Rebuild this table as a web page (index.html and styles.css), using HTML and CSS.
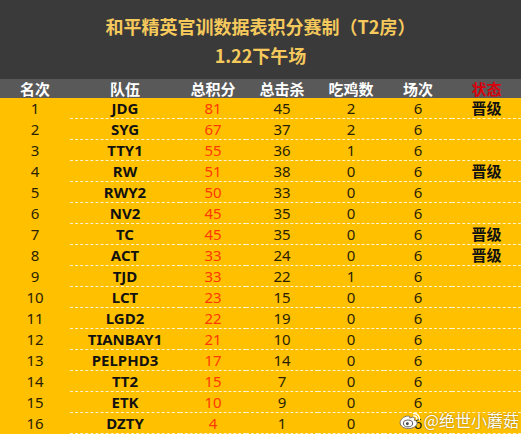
FILE: index.html
```html
<!DOCTYPE html>
<html lang="zh">
<head>
    <meta charset="UTF-8">
    <title>和平精英官训数据表</title>
    <link rel="stylesheet" href="styles.css">
</head>
<body>
    <div class="sheet">
        <div class="title">
            <div>和平精英官训数据表积分赛制（T2房）</div>
            <div>1.22下午场</div>
        </div>
        <div class="row head">
            <div>名次</div><div>队伍</div><div>总积分</div><div>总击杀</div><div>吃鸡数</div><div>场次</div><div class="state">状态</div>
        </div>
        <div id="rows"></div>
        <div class="mark">
            <svg width="22" height="19" viewBox="0 0 20 17">
                <path d="M8 4.5C4.5 4.5 1 7.6 1 10.6c0 3 3.4 5.2 7.5 5.2 4.4 0 8-2.3 8-5 0-1.7-1.5-2.3-2.6-2.6.5-1 .6-2.5-.9-2.7-1.2-.2-3 .7-3.3.8.3-1 .2-2.1-1.7-1.8z" fill="#fff" stroke="#666" stroke-width="0.8"/>
                <ellipse cx="8.2" cy="11.2" rx="4.2" ry="3.1" fill="none" stroke="#666" stroke-width="1"/>
                <circle cx="7.6" cy="11.5" r="1.3" fill="#444"/>
                <path d="M13.2 2.2a4.8 4.8 0 0 1 5.3 5.6M13.5 4.4a2.4 2.4 0 0 1 2.7 2.9" fill="none" stroke="#fff" stroke-width="1.3" stroke-linecap="round"/>
            </svg>
            <span>@绝世小蘑菇</span>
        </div>
    </div>

    <script>
        const teams = [
            [1, 'JDG', 81, 45, 2, 6, '晋级'],
            [2, 'SYG', 67, 37, 2, 6, ''],
            [3, 'TTY1', 55, 36, 1, 6, ''],
            [4, 'RW', 51, 38, 0, 6, '晋级'],
            [5, 'RWY2', 50, 33, 0, 6, ''],
            [6, 'NV2', 45, 35, 0, 6, ''],
            [7, 'TC', 45, 35, 0, 6, '晋级'],
            [8, 'ACT', 33, 24, 0, 6, '晋级'],
            [9, 'TJD', 33, 22, 1, 6, ''],
            [10, 'LCT', 23, 15, 0, 6, ''],
            [11, 'LGD2', 22, 19, 0, 6, ''],
            [12, 'TIANBAY1', 21, 10, 0, 6, ''],
            [13, 'PELPHD3', 17, 14, 0, 6, ''],
            [14, 'TT2', 15, 7, 0, 6, ''],
            [15, 'ETK', 10, 9, 0, 6, ''],
            [16, 'DZTY', 4, 1, 0, 6, '']
        ];

        const rows = document.getElementById('rows');
        teams.forEach(t => {
            const row = document.createElement('div');
            row.className = 'row';
            row.innerHTML =
                `<div class="rank">${t[0]}</div>` +
                `<div class="team">${t[1]}</div>` +
                `<div class="score">${t[2]}</div>` +
                `<div>${t[3]}</div>` +
                `<div>${t[4]}</div>` +
                `<div>${t[5]}</div>` +
                `<div class="team">${t[6]}</div>`;
            rows.appendChild(row);
        });
    </script>
</body>
</html>
```

FILE: styles.css
```css
body {
    margin: 0;
    font-family: 'Noto Sans', 'Noto Sans CJK SC', sans-serif;
}

.sheet {
    width: 521px;
    height: 434px;
    background: #ffc000;
    position: relative;
    overflow: hidden;
}

.title {
    height: 79px;
    box-sizing: border-box;
    padding-top: 12px;
    background: #3a3a3a;
    color: #f5c95b;
    font-family: 'Noto Sans CJK SC', sans-serif;
    font-weight: bold;
    font-size: 18px;
    line-height: 29px;
    text-align: center;
}

.row {
    display: grid;
    grid-template-columns: 70px 110px 66px 72px 66px 68px 69px;
    height: 21px;
    line-height: 20px;
    font-size: 15px;
    color: #2a1f00;
    text-align: center;
}

.row > div {
    border-bottom: 1px dashed rgba(255, 255, 255, 0.8);
}

.row > div.rank {
    border-bottom-color: transparent;
}

.row.head {
    height: 19px;
    line-height: 19px;
    background: #595959;
    color: #fff;
    font-family: 'Noto Sans CJK SC', sans-serif;
    font-weight: bold;
    font-size: 15px;
}

.row.head > div {
    border-bottom: 0;
}

.head .state {
    color: #d8000a;
}

.team {
    font-weight: bold;
    color: #111;
    font-family: 'Noto Sans', 'Noto Sans CJK SC', sans-serif;
}

.score {
    color: #ff3a00;
}

.mark {
    position: absolute;
    right: 2px;
    bottom: 2px;
    display: flex;
    align-items: center;
    gap: 3px;
    color: #fff;
    font-family: 'Noto Sans CJK SC', sans-serif;
    font-size: 16px;
    text-shadow: 0 0 2px rgba(0, 0, 0, 0.45);
}
```
